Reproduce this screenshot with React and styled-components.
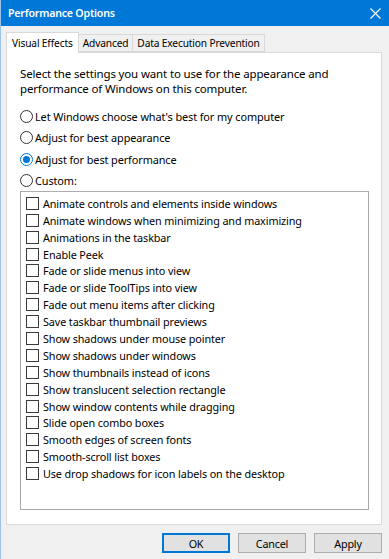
import React from 'react'
import styled, { createGlobalStyle } from 'styled-components'

const Global = createGlobalStyle`
  html, body { margin: 0; padding: 0; }
  body {
    width: 389px;
    height: 559px;
    overflow: hidden;
    font-family: "Noto Sans", "DejaVu Sans", sans-serif;
    font-size: 12px;
    color: #000;
  }
`

const Window = styled.div`
  width: 389px;
  height: 559px;
  box-sizing: border-box;
  border-left: 1px solid #9cc4ea;
  background: #f0f0f0;
  display: flex;
  flex-direction: column;
`

const TitleBar = styled.div`
  height: 26px;
  background: #0078d7;
  color: #fff;
  display: flex;
  align-items: center;
  justify-content: space-between;
  padding: 0 8px 0 7px;
  font-weight: 600;
  font-size: 10.6px;
  letter-spacing: -0.2px;
`

const Close = styled.svg`
  width: 11px;
  height: 11px;
`

const Body = styled.div`
  flex: 1;
  display: flex;
  flex-direction: column;
  padding: 6px 7px 0 5px;
`

const Tabs = styled.div`
  display: flex;
  align-items: flex-end;
  height: 20px;
  position: relative;
  z-index: 1;
`

const Tab = styled.div`
  box-sizing: border-box;
  height: ${({ active }) => (active ? '21px' : '18px')};
  margin-bottom: ${({ active }) => (active ? '-1px' : '0')};
  padding: 0 ${({ active }) => (active ? '5px' : '4px')};
  display: flex;
  align-items: center;
  border: 1px solid #d9d9d9;
  border-bottom: ${({ active }) => (active ? 'none' : '1px solid #d9d9d9')};
  border-left: ${({ first, active }) => (first || active ? '1px solid #d9d9d9' : 'none')};
  background: ${({ active }) => (active ? '#fff' : '#f0f0f0')};
  font-size: 10.2px;
  letter-spacing: -0.15px;
`

const Panel = styled.div`
  box-sizing: border-box;
  height: 473px;
  background: #fff;
  border: 1px solid #d9d9d9;
  padding: 13px 12px 14px 13px;
  display: flex;
  flex-direction: column;
`

const Intro = styled.p`
  margin: 0;
  line-height: 15px;
  font-size: 11.5px;
  letter-spacing: -0.15px;
`

const Radios = styled.div`
  margin-top: 14px;
  display: flex;
  flex-direction: column;
  gap: 8.3px;
`

const RadioRow = styled.label`
  display: flex;
  align-items: center;
  gap: 2px;
  height: 13px;
  font-size: 10.9px;
  letter-spacing: -0.1px;
`

const RadioDot = styled.span`
  box-sizing: border-box;
  width: 13px;
  height: 13px;
  border-radius: 50%;
  border: 1px solid ${({ checked }) => (checked ? '#0078d7' : '#333')};
  display: flex;
  align-items: center;
  justify-content: center;
  &::after {
    content: '';
    width: 7px;
    height: 7px;
    border-radius: 50%;
    background: ${({ checked }) => (checked ? '#0078d7' : 'transparent')};
  }
`

const List = styled.div`
  margin-top: 4px;
  flex: 1;
  border: 1px solid #a8a8a8;
  border-top-color: #adadad;
  padding: 3px 0 0 5px;
  display: flex;
  flex-direction: column;
`

const CheckRow = styled.label`
  display: flex;
  align-items: center;
  gap: 4px;
  height: 16.9px;
  font-size: 10.8px;
  letter-spacing: -0.1px;
`

const Box = styled.span`
  box-sizing: border-box;
  width: 13px;
  height: 13px;
  border: 1px solid #3a3a3a;
  background: #fff;
`

const Footer = styled.div`
  display: flex;
  justify-content: flex-end;
  gap: 8px;
  padding: 8px 0 0;
`

const Button = styled.button`
  box-sizing: border-box;
  width: 68px;
  height: 20px;
  background: #e1e1e1;
  border: 1px solid ${({ primary }) => (primary ? '#0078d7' : '#adadad')};
  box-shadow: ${({ primary }) => (primary ? 'inset 0 0 0 1px #0078d7' : 'none')};
  font-family: "Noto Sans", "DejaVu Sans", sans-serif;
  font-size: 10.8px;
  letter-spacing: -0.2px;
  color: #000;
  padding: 0;
`

const radios = [
  "Let Windows choose what's best for my computer",
  'Adjust for best appearance',
  'Adjust for best performance',
  'Custom:',
]

const effects = [
  'Animate controls and elements inside windows',
  'Animate windows when minimizing and maximizing',
  'Animations in the taskbar',
  'Enable Peek',
  'Fade or slide menus into view',
  'Fade or slide ToolTips into view',
  'Fade out menu items after clicking',
  'Save taskbar thumbnail previews',
  'Show shadows under mouse pointer',
  'Show shadows under windows',
  'Show thumbnails instead of icons',
  'Show translucent selection rectangle',
  'Show window contents while dragging',
  'Slide open combo boxes',
  'Smooth edges of screen fonts',
  'Smooth-scroll list boxes',
  'Use drop shadows for icon labels on the desktop',
]

export default function App() {
  return (
    <Window>
      <Global />
      <TitleBar>
        <span>Performance Options</span>
        <Close viewBox="0 0 11 11">
          <path d="M0.5 0.5 L10.5 10.5 M10.5 0.5 L0.5 10.5" stroke="#fff" strokeWidth="1.1" />
        </Close>
      </TitleBar>
      <Body>
        <Tabs>
          <Tab active first>Visual Effects</Tab>
          <Tab>Advanced</Tab>
          <Tab>Data Execution Prevention</Tab>
        </Tabs>
        <Panel>
          <Intro>
            Select the settings you want to use for the appearance and
            <br />
            performance of Windows on this computer.
          </Intro>
          <Radios>
            {radios.map((r, i) => (
              <RadioRow key={r}>
                <RadioDot checked={i === 2} />
                {r}
              </RadioRow>
            ))}
          </Radios>
          <List>
            {effects.map((e) => (
              <CheckRow key={e}>
                <Box />
                {e}
              </CheckRow>
            ))}
          </List>
        </Panel>
        <Footer>
          <Button primary>OK</Button>
          <Button>Cancel</Button>
          <Button>Apply</Button>
        </Footer>
      </Body>
    </Window>
  )
}
